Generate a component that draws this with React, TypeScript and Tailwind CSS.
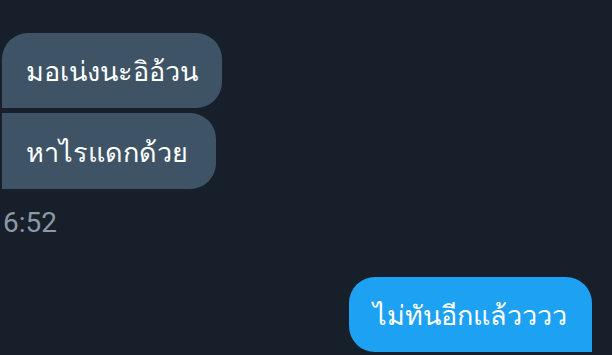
export default function App() {
  return (
    <div className="h-[355px] w-[612px] overflow-hidden bg-[#17202a] font-['Roboto','Noto_Sans',sans-serif]">
      <div className="flex flex-col items-start pl-[2px] pr-[20px] pt-[33px]">
        <div className="flex h-[75px] w-[220px] items-center rounded-tl-[26px] rounded-r-[26px] bg-[#3e5466] pl-[24px] pt-[4px] text-[27px] text-white">
          มอเน่งนะอิอ้วน
        </div>
        <div className="mt-[5px] flex h-[76px] w-[214px] items-center rounded-r-[26px] bg-[#3e5466] pl-[24px] pt-[4px] text-[27px] text-white">
          หาไรแดกด้วย
        </div>
        <div className="mt-[14px] pl-[1px] text-[28px] leading-[40px] text-[#8b98a5]">6:52</div>
        <div className="mt-[34px] flex h-[75px] w-[243px] items-center self-end rounded-t-[26px] rounded-bl-[26px] bg-[#1da1f2] pl-[24px] pt-[4px] text-[27px] text-white">
          ไม่ทันอีกแล้วววว
        </div>
      </div>
    </div>
  );
}
